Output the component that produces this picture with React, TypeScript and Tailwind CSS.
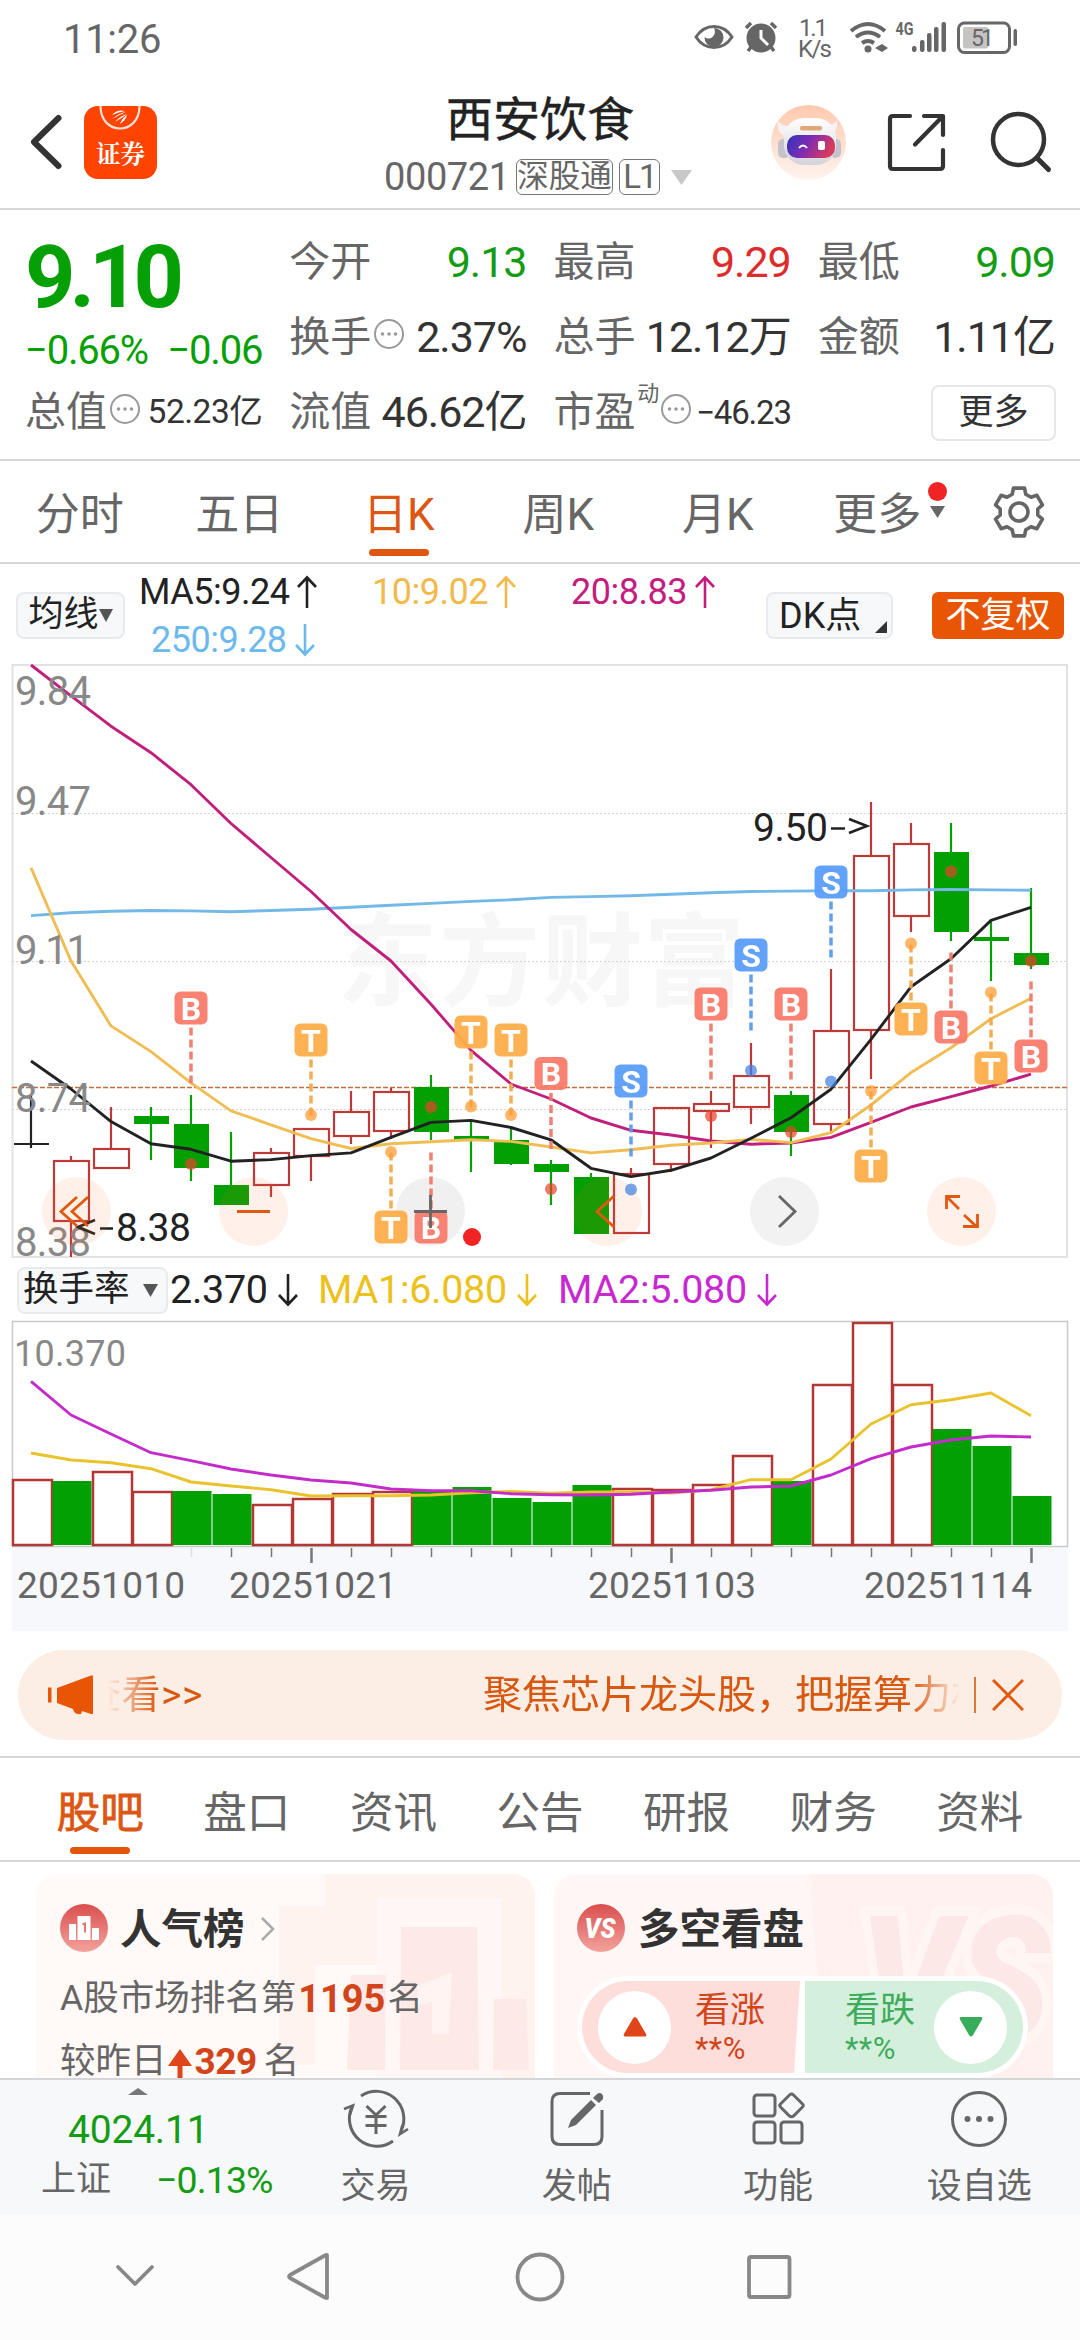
import type { ReactNode } from 'react';

type Candle = {
  kind: 'up' | 'down' | 'flat';
  high: number;
  top: number;
  bottom: number;
  low: number;
};

type Marker = {
  index: number;
  letter: 'B' | 'S' | 'T';
  box: number;
  dot: number;
};

const STEP = 40;
const centerX = (i: number) => 31 + i * STEP;

// price pane, pixel rows from the top of the pane
const candles: Candle[] = [
  { kind: 'flat', high: 437, top: 484, bottom: 486, low: 489 },
  { kind: 'up', high: 497, top: 501, bottom: 563, low: 598 },
  { kind: 'up', high: 448, top: 489, bottom: 510, low: 510 },
  { kind: 'down', high: 448, top: 457, bottom: 465, low: 501 },
  { kind: 'down', high: 436, top: 465, bottom: 509, low: 522 },
  { kind: 'down', high: 473, top: 526, bottom: 546, low: 546 },
  { kind: 'up', high: 489, top: 493, bottom: 527, low: 538 },
  { kind: 'up', high: 469, top: 469, bottom: 498, low: 522 },
  { kind: 'up', high: 432, top: 452, bottom: 478, low: 485 },
  { kind: 'up', high: 429, top: 432, bottom: 473, low: 480 },
  { kind: 'down', high: 416, top: 428, bottom: 473, low: 481 },
  { kind: 'down', high: 461, top: 477, bottom: 481, low: 513 },
  { kind: 'down', high: 468, top: 481, bottom: 505, low: 506 },
  { kind: 'down', high: 501, top: 505, bottom: 513, low: 546 },
  { kind: 'down', high: 514, top: 518, bottom: 575, low: 575 },
  { kind: 'up', high: 509, top: 514, bottom: 575, low: 575 },
  { kind: 'up', high: 448, top: 448, bottom: 506, low: 513 },
  { kind: 'up', high: 432, top: 444, bottom: 453, low: 489 },
  { kind: 'up', high: 384, top: 416, bottom: 449, low: 465 },
  { kind: 'down', high: 432, top: 436, bottom: 473, low: 497 },
  { kind: 'up', high: 310, top: 371, bottom: 466, low: 473 },
  { kind: 'up', high: 143, top: 196, bottom: 372, low: 420 },
  { kind: 'up', high: 164, top: 184, bottom: 258, low: 273 },
  { kind: 'down', high: 164, top: 193, bottom: 273, low: 282 },
  { kind: 'down', high: 262, top: 278, bottom: 282, low: 322 },
  { kind: 'down', high: 229, top: 294, bottom: 306, low: 310 },
];

const ma5 = [
  402, 430, 462.6, 484.8, 490.3, 502.2, 500.6, 496.6, 493.9, 478.4, 463.4, 461.4, 468.5, 480.8, 509.3, 517.6, 511.3,
  499, 479.2, 458.7, 430.2, 380.4, 327.8, 299.7, 261.4, 248.3,
];
const ma10 = [
  208.8, 302.1, 366.9, 392.6, 423.9, 451.9, 465.8, 479.6, 489.5, 484.8, 482.8, 480.8, 482.4, 488, 493.9, 490.7, 486.3,
  484, 480.4, 483.6, 473.7, 446, 413.6, 388.7, 359.8, 339.3,
];
const ma20 = [
  6, 36.8, 67.2, 93.7, 125.7, 164.5, 198.5, 232.5, 270.5, 302, 345.2, 391.4, 425, 440, 459, 471.3, 476, 482, 485.2,
  484, 478.4, 463.4, 448, 437.7, 427, 415.2,
];
const ma250 = [
  256.6, 253.8, 252.3, 251.5, 251.9, 252.7, 251.5, 250.3, 248.3, 246.3, 244.4, 242.4, 240.8, 238.4, 237.6, 236.8,
  235.3, 233.7, 232.5, 232.1, 231.7, 231.7, 230.9, 230.5, 230.9, 231.3,
];

const markers: Marker[] = [
  { index: 4, letter: 'B', box: 332.5, dot: 505 },
  { index: 7, letter: 'T', box: 364.5, dot: 456 },
  { index: 9, letter: 'T', box: 551.5, dot: 493 },
  { index: 10, letter: 'B', box: 551.5, dot: 448 },
  { index: 11, letter: 'T', box: 356.5, dot: 447.5 },
  { index: 12, letter: 'T', box: 364.5, dot: 456 },
  { index: 13, letter: 'B', box: 398, dot: 530 },
  { index: 15, letter: 'S', box: 405.5, dot: 530.5 },
  { index: 17, letter: 'B', box: 328.5, dot: 457 },
  { index: 18, letter: 'S', box: 279.5, dot: 411.5 },
  { index: 19, letter: 'B', box: 328.5, dot: 473 },
  { index: 20, letter: 'S', box: 206.5, dot: 422.5 },
  { index: 21, letter: 'T', box: 490.5, dot: 432 },
  { index: 22, letter: 'T', box: 343.5, dot: 284.5 },
  { index: 23, letter: 'B', box: 351.5, dot: 212.5 },
  { index: 24, letter: 'T', box: 392.5, dot: 333.5 },
  { index: 25, letter: 'B', box: 380.5, dot: 302 },
];

const markerColors = {
  B: { box: '#fa7c6b', line: '#f07a6a', dot: '#e8432b' },
  S: { box: '#5b9efb', line: '#5c9ae8', dot: '#3f80e6' },
  T: { box: '#ffae4a', line: '#f0a94c', dot: '#ff9a2e' },
};

// turnover pane
const volumes: { top: number; up: boolean }[] = [
  { top: 160, up: true },
  { top: 162, up: false },
  { top: 152, up: true },
  { top: 172, up: true },
  { top: 172, up: false },
  { top: 175, up: false },
  { top: 185, up: true },
  { top: 179, up: true },
  { top: 174, up: true },
  { top: 172, up: true },
  { top: 172, up: false },
  { top: 168, up: false },
  { top: 179, up: false },
  { top: 183, up: false },
  { top: 166, up: false },
  { top: 169, up: true },
  { top: 170, up: true },
  { top: 165, up: true },
  { top: 136, up: true },
  { top: 162, up: false },
  { top: 65, up: true },
  { top: 3, up: true },
  { top: 65, up: true },
  { top: 110, up: false },
  { top: 127, up: false },
  { top: 177, up: false },
];
const volMa1 = [
  134, 141, 143.7, 149.7, 163, 167, 170.7, 177, 176.7, 176.7, 176, 173.7, 172.5, 174.3, 173, 173, 174, 170.7, 160.7,
  160.7, 140, 105, 85.7, 80.7, 74, 96.7,
];
const volMa2 = [
  62.3, 96, 115, 133.7, 141.7, 150, 156, 161, 164, 170, 171.7, 171.7, 174.7, 175.7, 176, 175.3, 173, 171.3, 168, 167,
  156, 139.7, 128, 121, 117, 118,
];

const toPoints = (ys: number[]) => ys.map((y, i) => `${centerX(i)},${y}`).join(' ');

function gearPath() {
  const pts: string[] = [];
  for (let k = 0; k < 6; k++) {
    const a = -90 + k * 60;
    for (const [r, da] of [
      [19, -21],
      [24.5, -13],
      [24.5, 13],
      [19, 21],
    ]) {
      const t = ((a + da) * Math.PI) / 180;
      pts.push(`${(r * Math.cos(t)).toFixed(2)} ${(r * Math.sin(t)).toFixed(2)}`);
    }
  }
  return `M${pts.join('L')}Z`;
}

function Arrow({ down = false }: { down?: boolean }) {
  return (
    <svg width="22" height="34" viewBox="0 0 22 34" fill="none" stroke="currentColor" strokeWidth="2.6" className="shrink-0">
      <path d={down ? 'M11 1v30M2 22l9 9.5 9-9.5' : 'M11 33V3M2 12l9-9.5 9 9.5'} />
    </svg>
  );
}

function Caret({ w, h, className = '' }: { w: number; h: number; className?: string }) {
  return (
    <svg width={w} height={h} viewBox="0 0 10 10" preserveAspectRatio="none" fill="currentColor" className={`shrink-0 ${className}`}>
      <path d="M0 0h10L5 10z" />
    </svg>
  );
}

function InfoDot() {
  return (
    <svg width="32" height="32" viewBox="0 0 32 32" className="mb-2 ml-[2px] shrink-0">
      <circle cx="16" cy="16" r="14" fill="none" stroke="#999" strokeWidth="2" />
      <circle cx="9.5" cy="16" r="1.8" fill="#999" />
      <circle cx="16" cy="16" r="1.8" fill="#999" />
      <circle cx="22.5" cy="16" r="1.8" fill="#999" />
    </svg>
  );
}

function StatusBar() {
  return (
    <div className="flex h-[80px] items-center pl-[63px] text-[#666]">
      <span className="w-[631px] text-[40px] tracking-[-0.3px]">11:26</span>
      <svg width="330" height="80" viewBox="693 0 330 80" fill="none" stroke="#666">
        <path d="M695 37c9-14 27-14 36 0-9 14-27 14-36 0z" strokeWidth="3" />
        <path d="M713 28a9.500 9.500 0 1 1-9.500 9q4 3 8 0 4-4 1.500-9z" fill="#666" stroke="none" />
        <circle cx="760" cy="38" r="14.500" fill="#666" stroke="none" />
        <path d="M745 28l5-5M770 23l5 5M750 47l-3 4M770 47l3 4" strokeWidth="3.500" />
        <path d="M760 30v8l7 7" stroke="#fff" strokeWidth="3" />
        <g fill="#666" stroke="none" fontFamily="Roboto, sans-serif">
          <text x="798" y="36" fontSize="24" textLength="29">1.1</text>
          <text x="797" y="57" fontSize="24" textLength="34">K/s</text>
          <text x="894.500" y="35" fontSize="18" fontWeight="700" textLength="18" lengthAdjust="spacingAndGlyphs">4G</text>
          <rect x="911" y="46" width="4.500" height="6" rx="2" />
          <rect x="919" y="40" width="4.500" height="12" rx="2" />
          <rect x="926" y="33" width="4.500" height="19" rx="2" />
          <rect x="933" y="27" width="4.500" height="25" rx="2" />
          <rect x="940.500" y="22" width="4.500" height="30" rx="2" />
          <circle cx="867" cy="49" r="3.500" />
          <path d="M881 44v8l-7-4zM881 44v8l6-4z" />
        </g>
        <path d="M850 31q17-14 34 0M855 37q12-9 24 0M861 43q6-4 12 0" strokeWidth="4" />
        <rect x="957.500" y="23" width="51" height="29.500" rx="6" strokeWidth="3" />
        <rect x="962" y="27" width="25" height="21.500" rx="2" fill="#c4c4c4" stroke="none" />
        <text x="970" y="46" fontSize="23" textLength="23" fill="#666" stroke="none" fontFamily="Roboto, sans-serif">51</text>
        <rect x="1012.500" y="29" width="3.500" height="17" rx="1.700" fill="#666" stroke="none" />
      </svg>
    </div>
  );
}

function Header() {
  return (
    <header className="flex h-[130px] border-b-2 border-[#d6d6d6] text-[#333]">
      <div className="flex w-[384px] items-start pt-[26px] pl-[29px]">
        <svg width="34" height="72" viewBox="0 0 34 72" fill="none" stroke="#333" strokeWidth="6" strokeLinecap="round" strokeLinejoin="round">
          <path d="M29.500 12L5 36l24.500 24" />
        </svg>
        <div className="relative ml-[21px] flex h-[73px] w-[73px] justify-center overflow-hidden rounded-[14px] bg-[#ff4300]">
          <svg width="73" height="73" viewBox="0 0 73 73" className="absolute top-0 left-0">
            <path d="M16.500 0c0 30 39 30 39 0" fill="none" stroke="#ffe3d8" strokeWidth="2.200" />
            <path d="M28 9q5-6 13-4-6 1-13 4zM28 13q7-6 14-7-7 3-14 7zM31 16q5-6 12-8-5 4-12 8zM36 18q2-6 7-9-1 5-7 9z" fill="#fff" />
          </svg>
          <span className="mt-[33px] font-['Noto_Serif_CJK_SC','Noto_Sans_CJK_SC',serif] text-[24.500px] leading-[28px] font-bold text-white">证券</span>
        </div>
      </div>
      <div className="flex w-[312px] flex-col items-center">
        <h1 className="h-[68px] pt-[10px] text-[47px] leading-[60px] text-[#222] [-webkit-text-stroke:0.5px_#222]">西安饮食</h1>
        <div className="flex h-[58px] items-center gap-[6px] self-start text-[#666]">
          <span className="w-[126px] text-[38px] tracking-[-0.4px]">000721</span>
          <span className="flex h-[36px] w-[97px] items-center justify-center rounded-[6px] border border-[#777] text-[31.500px]">深股通</span>
          <span className="flex h-[36px] w-[41px] items-center justify-center rounded-[6px] border border-[#777] text-[33px] tracking-[-2px]">L1</span>
          <Caret w={21} h={15} className="ml-[5px] text-[#c8c8c8]" />
        </div>
      </div>
      <svg width="384" height="128" viewBox="696 80 384 128" fill="none">
        <defs>
          <linearGradient id="halo" x1="0" y1="0" x2="0" y2="1">
            <stop offset="0" stopColor="#ffc9ad" />
            <stop offset="1" stopColor="#fff4ef" />
          </linearGradient>
          <linearGradient id="visor" x1="0" y1="0" x2="1" y2="0.300">
            <stop offset="0" stopColor="#2b36b8" />
            <stop offset="0.500" stopColor="#7f2bb4" />
            <stop offset="1" stopColor="#d63a5e" />
          </linearGradient>
          <linearGradient id="shell" x1="0" y1="0" x2="0" y2="1">
            <stop offset="0" stopColor="#fff" />
            <stop offset="1" stopColor="#d4d3da" />
          </linearGradient>
        </defs>
        <circle cx="808.500" cy="142.500" r="37.500" fill="url(#halo)" />
        <path d="M784 136q-8-5-6-15 4 6 14 5zM832 134q7-5 5-14-4 6-12 6z" fill="#f6f2f2" />
        <rect x="778" y="139" width="12" height="19" rx="5" fill="#c4c2cc" />
        <rect x="830" y="139" width="11" height="19" rx="5" fill="#c4c2cc" />
        <rect x="784" y="118" width="52" height="47" rx="20" fill="url(#shell)" />
        <rect x="800" y="126" width="22" height="4.500" rx="2" fill="#e0a878" />
        <rect x="787" y="135" width="48" height="23" rx="10" fill="url(#visor)" />
        <path d="M799 148q4-5 8 0" stroke="#fff" strokeWidth="2" />
        <rect x="818" y="141" width="7" height="9" rx="2" fill="#fff" />
        <g stroke="#333" strokeWidth="4.200" strokeLinecap="round" strokeLinejoin="round">
          <path d="M910 116h-17q-3 0-3 3v47q0 3 3 3h47q3 0 3-3v-16M924 116h19v19M942 117l-27 27.500" />
          <circle cx="1018.500" cy="139.500" r="25.500" strokeWidth="4.500" />
          <path d="M1037.500 158.500l11 11" strokeWidth="5" />
        </g>
      </svg>
    </header>
  );
}

function Stat({ label, extra, value, tone = 'text-[#333]' }: { label: string; extra?: ReactNode; value: string; tone?: string }) {
  return (
    <div className="flex items-center whitespace-nowrap">
      <span className="text-[41px] tracking-[-0.100px] text-[#666]">{label}</span>
      {extra}
      <span className={`ml-auto ${tone}`}>{value}</span>
    </div>
  );
}

function Quote() {
  return (
    <section className="grid h-[251px] grid-cols-4 grid-rows-[75px_75px_75px] gap-x-[27px] border-b-2 border-[#d6d6d6] px-[25px] pt-[15px] text-[43px] tracking-[-1px]">
      <div className="row-span-2 flex flex-col text-[#05a005]">
        <span className="mt-[6px] h-[90px] text-[88px] leading-[92px] font-bold tracking-[-6px]">9.10</span>
        <div className="mt-[5px] flex justify-between text-[40px] leading-[50px] tracking-[-1.200px]">
          <span>−0.66%</span>
          <span>−0.06</span>
        </div>
      </div>
      <Stat label="今开" value="9.13" tone="text-[#149c14]" />
      <Stat label="最高" value="9.29" tone="text-[#dd2c2c]" />
      <Stat label="最低" value="9.09" tone="text-[#149c14]" />
      <Stat label="换手" extra={<InfoDot />} value="2.37%" />
      <Stat label="总手" value="12.12万" />
      <Stat label="金额" value="1.11亿" />
      <Stat label="总值" extra={<InfoDot />} value="52.23亿" tone="text-[33.500px] tracking-[-0.500px] text-[#333]" />
      <Stat label="流值" value="46.62亿" />
      <Stat
        label="市盈"
        extra={
          <>
            <span className="ml-[2px] mb-[38px] text-[22px] text-[#666]">动</span>
            <InfoDot />
          </>
        }
        value="−46.23"
        tone="text-[33px] tracking-[-1.200px] text-[#333]"
      />
      <div className="flex items-center justify-end">
        <button className="-mr-px h-[56px] w-[125px] rounded-[8px] border-2 border-[#e6e6e6] text-[35px] leading-[50px] tracking-normal text-[#333]">更多</button>
      </div>
    </section>
  );
}

function PeriodTabs() {
  const tabs = ['分时', '五日', '日K', '周K', '月K'];
  return (
    <nav className="flex h-[103px] border-b-2 border-[#d6d6d6] text-[44px] text-[#666]">
      {tabs.map((t) => (
        <div key={t} className={t === '日K' ? 'flex w-[159.500px] flex-col items-center text-[#dc5713]' : 'flex w-[159.500px] flex-col items-center'}>
          <span className="mt-[24px] leading-[60px]">{t}</span>
          {t === '日K' && <i className="mt-[4px] h-[7px] w-[60px] rounded-full bg-[#e0560f]" />}
        </div>
      ))}
      <div className="flex w-[159.500px] items-start justify-center">
        <span className="relative mt-[24px] leading-[60px]">
          更多
          <i className="absolute -top-[3px] left-[95px] size-[19px] rounded-full bg-[#f02424]" />
          <Caret w={15} h={12} className="absolute top-[21px] left-[97px]" />
        </span>
      </div>
      <div className="flex flex-1 items-center justify-center">
        <svg width="56" height="56" viewBox="-28 -28 56 56" fill="none" stroke="#666" strokeWidth="3.600" strokeLinejoin="round">
          <path d={gearPath()} />
          <circle r="9" />
        </svg>
      </div>
    </nav>
  );
}

function AverageBar() {
  return (
    <div className="flex h-[98px] items-start text-[36px] tracking-[-0.500px] text-[#222]">
      <button className="mt-[28px] ml-[16px] flex h-[47px] w-[109px] items-center justify-center rounded-[8px] border-2 border-[#e9eaee] bg-[#f7f8fa] text-[35px] tracking-normal">
        均线
        <Caret w={14} h={13} className="text-[#555]" />
      </button>
      <div className="ml-[14px] flex w-[627px] flex-col pt-[4px]">
        <div className="flex h-[48px] items-center">
          <span className="flex w-[233px] items-center gap-[7px]">MA5:9.24<Arrow /></span>
          <span className="flex w-[199px] items-center gap-[7px] text-[#f2b94c]">10:9.02<Arrow /></span>
          <span className="flex items-center gap-[7px] text-[#c41d80]">20:8.83<Arrow /></span>
        </div>
        <span className="flex h-[48px] items-center gap-[7px] pl-[12px] text-[#6cb9ee]">250:9.28<Arrow down /></span>
      </div>
      <button className="relative mt-[28px] flex h-[47px] w-[127px] items-center rounded-[8px] border-2 border-[#e9eaee] bg-[#f7f8fa] pl-[11px] text-[36px] tracking-normal">
        DK点
        <svg width="12" height="12" viewBox="0 0 12 12" className="absolute right-[4px] bottom-[4px]">
          <path d="M12 0v12H0z" fill="#333" />
        </svg>
      </button>
      <button className="mt-[28px] ml-[39px] h-[47px] w-[132px] rounded-[6px] bg-[#e85505] text-[35px] leading-[48px] tracking-normal text-white">不复权</button>
    </div>
  );
}

function MarkerGlyph({ index, letter, box, dot }: Marker) {
  const x = centerX(index);
  const c = markerColors[letter];
  const dash = box < dot ? [box + 36, box + 93] : [box - 58, box - 2];
  return (
    <g opacity="0.950">
      <line x1={x} x2={x} y1={dash[0]} y2={dash[1]} stroke={c.line} strokeWidth="3.500" strokeDasharray="8 4" />
      <circle cx={x} cy={dot} r="6" fill={c.dot} opacity="0.750" />
      <rect x={x - 16.500} y={box} width="33" height="33" rx="6" fill={c.box} />
      <text x={x} y={box + 28} fontSize="32" fontWeight="700" fill="#fff" textAnchor="middle">
        {letter}
      </text>
    </g>
  );
}

function PriceChart() {
  return (
    <svg width="1080" height="600" viewBox="0 0 1080 600" fontFamily="Roboto, 'Noto Sans CJK SC', sans-serif" className="-mt-[3px] block">
      <rect x="12.500" y="6" width="1054.500" height="592" fill="none" stroke="#e2e2e2" strokeWidth="2" />
      <text x="337" y="339" fontSize="101" fontWeight="700" fill="#f7f7f7" textLength="408">东方财富</text>
      {[154.500, 302.500, 450.500].map((y) => (
        <line key={y} x1="12" x2="1067" y1={y} y2={y} stroke="#d4d4d4" strokeWidth="1" strokeDasharray="2 2" />
      ))}
      <line x1="12" x2="1067" y1="428.500" y2="428.500" stroke="#c0703c" strokeWidth="1.400" strokeDasharray="5 2" />
      {candles.map((c, i) => {
        const x = centerX(i);
        const color = c.kind === 'up' ? '#bd3a38' : c.kind === 'down' ? '#02a002' : '#222';
        return (
          <g key={i} stroke={color} strokeWidth="2.200">
            {c.kind === 'up' ? (
              <>
                <path d={`M${x} ${c.high}V${c.top}M${x} ${c.bottom}V${c.low}`} />
                <rect x={x - 17} y={c.top + 1} width="35" height={c.bottom - c.top - 2} fill="none" />
              </>
            ) : (
              <>
                <path d={`M${x} ${c.high}V${c.low}`} />
                <rect x={x - 17} y={c.top} width="35" height={c.bottom - c.top} fill={color} stroke="none" />
              </>
            )}
          </g>
        );
      })}
      <g fill="none" strokeWidth="2.900" strokeLinejoin="round">
        <polyline points={toPoints(ma250)} stroke="#74b8e8" />
        <polyline points={toPoints(ma20)} stroke="#c01f7c" />
        <polyline points={toPoints(ma10)} stroke="#f0bd55" />
        <polyline points={toPoints(ma5)} stroke="#222" />
      </g>
      <g fontSize="40" fill="#888">
        <text x="15" y="45.500" textLength="76">9.84</text>
        <text x="15" y="155.500" textLength="76">9.47</text>
        <text x="15" y="304.500" textLength="74">9.11</text>
        <text x="15" y="452.500" textLength="76">8.74</text>
        <text x="15" y="596.500" textLength="76">8.38</text>
      </g>
      <g fontSize="39" fill="#222">
        <path d="M95 561L78 568l17 7M100 569.500h13" fill="none" stroke="#222" strokeWidth="2.600" />
        <text x="116" y="582" textLength="75">8.38</text>
        <text x="753" y="181.500" textLength="75">9.50</text>
        <path d="M831 169.500h14M849 160l18 7-18 7" fill="none" stroke="#222" strokeWidth="2.600" />
      </g>
      {[76.500, 253.500, 607.500, 961.500].map((x) => (
        <circle key={x} cx={x} cy="552.500" r="34.500" fill="#fb6a2a" opacity="0.100" />
      ))}
      <circle cx="430.500" cy="552.500" r="34.500" fill="#000" opacity="0.060" />
      <circle cx="784.500" cy="552.500" r="34.500" fill="#f2f2f2" />
      {markers.map((m) => (
        <MarkerGlyph key={m.index} {...m} />
      ))}
      <g fill="none" strokeWidth="2.800">
        <g stroke="#e0590f">
          <path d="M77 538L61 552.500 77 567M88 538L72 552.500 88 567M237 552.500h33M614 537l-17 15.500 17 15.500" />
          <path d="M946.500 550v-12.500H960M947 538l12 12M964 556l13 12M977.500 555v12.500H963" />
        </g>
        <path d="M414 552.500h33M430.500 536v33M779 537l16 15.500-16 15.500" stroke="#666" />
      </g>
      <circle cx="472" cy="578" r="9" fill="#f02424" />
    </svg>
  );
}

function TurnoverBar() {
  return (
    <div className="flex h-[61px] items-center pt-px pl-[17px] text-[39.500px] tracking-[-0.300px] text-[#222]">
      <button className="flex h-[47px] w-[151px] items-center gap-[13px] rounded-[8px] border-2 border-[#e9eaee] bg-[#f7f8fa] pl-[4px] text-[35.500px] tracking-normal">
        换手率
        <Caret w={15} h={13} className="text-[#555]" />
      </button>
      <span className="ml-[2px] flex w-[148px] items-center gap-[9px]">2.370<Arrow down /></span>
      <span className="flex w-[240px] items-center gap-[9px] text-[#ecc11c]">MA1:6.080<Arrow down /></span>
      <span className="flex items-center gap-[9px] text-[#c829cf]">MA2:5.080<Arrow down /></span>
    </div>
  );
}

function TurnoverChart() {
  const dates: [string, number][] = [
    ['20251010', 17],
    ['20251021', 229],
    ['20251103', 588],
    ['20251114', 864],
  ];
  return (
    <svg width="1080" height="312" viewBox="0 0 1080 312" fontFamily="Roboto, sans-serif" className="-mt-[1px] block">
      <rect x="12" y="228" width="1056" height="84" fill="#f7f8fb" />
      <rect x="12.500" y="2.500" width="1055" height="225" fill="#fff" stroke="#c9c9c9" strokeWidth="1.500" />
      {volumes.map((v, i) =>
        v.up ? (
          <rect key={i} x={13 + i * STEP} y={v.top + 1} width="39" height={225 - v.top} fill="#fff" stroke="#b33735" strokeWidth="2.500" />
        ) : (
          <rect key={i} x={12.500 + i * STEP} y={v.top} width="39" height={226 - v.top} fill="#02a002" />
        ),
      )}
      <g fill="none" strokeWidth="2.900" strokeLinejoin="round">
        <polyline points={toPoints(volMa1)} stroke="#eac32c" />
        <polyline points={toPoints(volMa2)} stroke="#c32bca" />
      </g>
      <text x="14" y="47" fontSize="36" fill="#888" textLength="112">10.370</text>
      {Array.from({ length: 22 }, (_, k) => k + 4).map((i) => {
        const major = i === 7 || i === 16 || i === 25;
        return (
          <line
            key={i}
            x1={centerX(i) + 0.500}
            x2={centerX(i) + 0.500}
            y1="229"
            y2={major ? 244 : 238}
            stroke={i === 4 ? '#ddd' : '#777'}
            strokeWidth={major ? 2.500 : 1.500}
          />
        );
      })}
      <g fontSize="37" fill="#666">
        {dates.map(([d, x]) => (
          <text key={d} x={x} y="278.500" textLength="168">
            {d}
          </text>
        ))}
      </g>
    </svg>
  );
}

function Notice() {
  return (
    <div className="mx-[18px] mt-[19px] flex h-[90px] items-center rounded-full bg-[#fceee4] text-[39px] text-[#d9580f]">
      <svg width="48" height="44" viewBox="0 0 48 44" className="ml-[29px]" fill="#e85505">
        <path d="M1 14.500h3.500v15H1zM10 15L44 2.500h2v38.500h-2L35 38l-1 3q-7 1-8-5L10 30z" />
      </svg>
      <div className="ml-[13px] flex w-[852px] overflow-hidden pt-px whitespace-nowrap [mask-image:linear-gradient(to_right,transparent,black_50px,black_calc(100%-50px),transparent)]">
        <span className="-ml-[26px] w-[401px] shrink-0 tracking-[0.500px]">查看&gt;&gt;</span>
        <span>聚焦芯片龙头股，把握算力机</span>
      </div>
      <i className="ml-[14px] h-[36px] w-[2px] bg-[#d9773f]" />
      <svg width="32" height="32" viewBox="0 0 32 32" className="ml-[16px]" stroke="#e0590f" strokeWidth="3">
        <path d="M1 1l30 30M31 1L1 31" />
      </svg>
    </div>
  );
}

function SectionTabs() {
  const tabs = ['股吧', '盘口', '资讯', '公告', '研报', '财务', '资料'];
  return (
    <nav className="mt-[16px] flex h-[106px] border-y-2 border-[#d6d6d6] px-[27px] text-[43.500px] text-[#666]">
      {tabs.map((t, i) => (
        <div key={t} className={i === 0 ? 'flex flex-1 flex-col items-center text-[#dc5713] [-webkit-text-stroke:0.8px_#dc5713]' : 'flex flex-1 flex-col items-center'}>
          <span className="mt-[26px] leading-[60px]">{t}</span>
          {i === 0 && <i className="mt-[3px] h-[7px] w-[60px] rounded-full bg-[#e5540b]" />}
        </div>
      ))}
    </nav>
  );
}

function PopularityCard() {
  return (
    <div className="relative h-[230px] w-[499px] overflow-hidden rounded-[22px] bg-[#fff9f7] pl-[24px]">
      <svg width="499" height="230" viewBox="0 0 499 230" className="absolute top-0 left-0">
        <path d="M289 0h210v230H420V30h-79v61h-62v100h-36V32h46z" fill="#fff3f0" />
        <path d="M341 24h124v206H341z" fill="#fff7f5" />
        <path d="M365 53h76l2 143h-79zM315 101h35l-1 95h-38zM458 125h32l3 71h-36z" fill="#fdeae7" />
        <path d="M382 112l34-14-3 62h-17v-32l-16 4z" fill="#fff4f2" />
      </svg>
      <div className="relative">
        <div className="flex h-[112px] items-center">
          <svg width="48" height="48" viewBox="0 0 48 48" className="-mt-[4px]">
            <defs>
              <linearGradient id="badge" x1="0" y1="0" x2="0" y2="1">
                <stop offset="0" stopColor="#d94f4f" />
                <stop offset="1" stopColor="#f3a29c" />
              </linearGradient>
            </defs>
            <circle cx="24" cy="24" r="24" fill="url(#badge)" />
            <path d="M9 20h7v16H9zM17.500 12h13v24h-13zM32 24h7v12h-7z" fill="#fff" />
            <path d="M22.500 20.500l2.500-1v9" stroke="#e07670" strokeWidth="2" fill="none" />
          </svg>
          <h2 className="ml-[12px] text-[41.500px] font-bold text-[#333]">人气榜</h2>
          <svg width="16" height="26" viewBox="0 0 16 26" fill="none" stroke="#aaa" strokeWidth="2.500" className="-mt-[2px] ml-[15px]">
            <path d="M2 2l11 11L2 24" />
          </svg>
        </div>
        <p className="-mt-[2px] flex h-[30px] items-center text-[35.500px] whitespace-nowrap text-[#666]">
          A股市场排名第<b className="mx-[2px] text-[38px] text-[#d2451a]">1195</b>名
        </p>
        <p className="mt-[33px] flex h-[30px] items-center text-[35.500px] whitespace-nowrap text-[#666]">
          较昨日
          <svg width="24" height="34" viewBox="0 0 24 34" className="mt-[4px] ml-[1px]" fill="#e0441a">
            <path d="M12 2L0 19h9.500v15h5V19H24z" />
          </svg>
          <b className="mr-[7px] ml-[3px] text-[37px] tracking-[-0.500px] text-[#d2451a]">329</b>名
        </p>
      </div>
    </div>
  );
}

function SentimentCard() {
  return (
    <div className="relative h-[230px] w-[499px] overflow-hidden rounded-[22px] bg-[#fff7f5] pl-[23px]">
      <svg width="499" height="230" viewBox="0 0 499 230" className="absolute top-0 left-0" fontFamily="Roboto, sans-serif">
        <path d="M255 0h244v230H275z" fill="#fef1ef" />
        <text x="306" y="166" fontSize="174" fontWeight="900" fontStyle="italic" fill="#fce9e7" stroke="#fff5f3" strokeWidth="20" paintOrder="stroke" textLength="190" lengthAdjust="spacingAndGlyphs">
          VS
        </text>
      </svg>
      <div className="relative">
        <div className="flex h-[112px] items-center">
          <svg width="48" height="48" viewBox="0 0 48 48" className="-mt-[4px]">
            <circle cx="24" cy="24" r="24" fill="url(#badge)" />
            <text x="23" y="34" fontSize="28" fontWeight="900" fontStyle="italic" fill="#fff" textAnchor="middle" textLength="31" lengthAdjust="spacingAndGlyphs" fontFamily="Roboto, sans-serif">
              VS
            </text>
          </svg>
          <h2 className="ml-[13px] text-[41.500px] font-bold text-[#333]">多空看盘</h2>
        </div>
        <div className="-mt-[10px] flex h-[102px] w-[451px] gap-[5px] rounded-full border-[5px] border-white/80 bg-white/80 text-[35px] leading-[42px]">
          <div className="flex flex-1 items-center rounded-l-full bg-[#fddedb] pl-[16px] text-[#d2451a] [clip-path:polygon(0_0,100%_0,calc(100%-6px)_100%,0_100%)]">
            <i className="flex size-[73px] items-center justify-center rounded-full bg-white">
              <svg width="24" height="20" viewBox="0 0 24 20" fill="#e0441a"><path d="M12 0q1 0 2 1.500L23 17q1 2.500-1 2.500H2Q0 19.500 1 17L10 1.500Q11 0 12 0z" /></svg>
            </i>
            <div className="mt-[2px] ml-[24px] flex flex-col">
              <span>看涨</span>
              <span className="text-[31px] leading-[34px] tracking-[0.500px]">**%</span>
            </div>
          </div>
          <div className="flex flex-1 items-center justify-end rounded-r-full bg-[#d5efdd] pr-[16px] text-[#3dac5c]">
            <div className="mt-[2px] mr-[19px] flex flex-col">
              <span>看跌</span>
              <span className="text-[31px] leading-[34px] tracking-[0.500px]">**%</span>
            </div>
            <i className="flex size-[73px] items-center justify-center rounded-full bg-white">
              <svg width="24" height="20" viewBox="0 0 24 20" fill="#37ad5b"><path d="M12 19.500q1 0 2-1.500l9-15.500Q24 0 22 0H2Q0 0 1 2.500L10 18q1 1.500 2 1.500z" /></svg>
            </i>
          </div>
        </div>
      </div>
    </div>
  );
}

function Action({ label, children }: { label: string; children: ReactNode }) {
  return (
    <div className="flex flex-1 flex-col items-center">
      <svg width="68" height="62" viewBox="-34 -31 68 62" fill="none" stroke="#666" strokeWidth="3" className="mt-[8px]">
        {children}
      </svg>
      <span className="mt-[13px] text-[35px] leading-[48px] text-[#666]">{label}</span>
    </div>
  );
}

function ActionBar() {
  return (
    <footer className="flex h-[136px] border-t-2 border-[#d4d7da] bg-[#f7f8fa]">
      <div className="flex w-[275px] flex-col">
        <Caret w={20} h={7} className="mt-[8px] ml-[128px] rotate-180 text-[#777]" />
        <span className="mt-[2px] pl-[68px] text-[39px] leading-[66px] tracking-[-0.200px] text-[#149c14]">4024.11</span>
        <div className="flex items-center pl-[41px] leading-[34px]">
          <span className="w-[115px] text-[35px] text-[#666]">上证</span>
          <span className="text-[37.500px] tracking-[-0.900px] text-[#149c14]">−0.13%</span>
        </div>
      </div>
      <Action label="交易">
        <path d="M-15-23A27.500 27.500 0 0 1 25 12M17 22A27.500 27.500 0 0 1-24-12" />
        <path d="M-32-10l9-3.500-3 9M32 10l-8 5 2.500-9" strokeWidth="2.600" />
        <path d="M-9.500-13L0-4l9.500-9M0-4v19M-10.500-2.500h21M-10.500 6.500h21" />
      </Action>
      <Action label="发帖">
        <path d="M13-25.500h-30q-8 0-8 8v35q0 8 8 8h34q8 0 8-8V-9" />
        <path d="M-9 9l3-8 20-20 5 5L-1 6zM16-21l4-4q3-2 5 0t1 5l-4 4z" fill="#666" stroke="none" />
      </Action>
      <Action label="功能">
        <rect x="-24" y="-24" width="21" height="21" rx="3" />
        <rect x="-24" y="3" width="21" height="21" rx="3" />
        <rect x="3" y="3" width="21" height="21" rx="3" />
        <path d="M13.500-25q1 0 2 1l9 9q1.500 1.500 0 3l-9 9q-2 1.500-4 0l-9-9q-1.500-1.500 0-3l9-9q1-1 2-1z" />
      </Action>
      <Action label="设自选">
        <circle r="26.500" />
        <circle cx="-11.500" r="3" fill="#666" stroke="none" />
        <circle r="3" fill="#666" stroke="none" />
        <circle cx="11.500" r="3" fill="#666" stroke="none" />
      </Action>
    </footer>
  );
}

function SystemNav() {
  return (
    <div className="h-[126px] bg-[#fcfcfc]">
      <svg width="1080" height="126" viewBox="0 2214 1080 126" fill="none" stroke="#888" strokeWidth="3.800" strokeLinejoin="round" strokeLinecap="round">
        <path d="M118 2267l17 17 17-17" />
        <path d="M327 2255v43q-2 0-3-1l-34-19q-2-1.500 0-3l34-19q1-1 3-1z" />
        <circle cx="540" cy="2277" r="22.500" />
        <rect x="749" y="2257" width="40.500" height="40" rx="2" />
      </svg>
    </div>
  );
}

export default function App() {
  return (
    <div className="flex h-[2340px] w-[1080px] flex-col overflow-hidden bg-white font-['Roboto','Noto_Sans_CJK_SC',sans-serif]">
      <StatusBar />
      <Header />
      <Quote />
      <PeriodTabs />
      <AverageBar />
      <PriceChart />
      <TurnoverBar />
      <TurnoverChart />
      <Notice />
      <SectionTabs />
      <div className="flex min-h-0 flex-1 gap-[19px] overflow-hidden pt-[12px] pl-[36px]">
        <PopularityCard />
        <SentimentCard />
      </div>
      <ActionBar />
      <SystemNav />
    </div>
  );
}
